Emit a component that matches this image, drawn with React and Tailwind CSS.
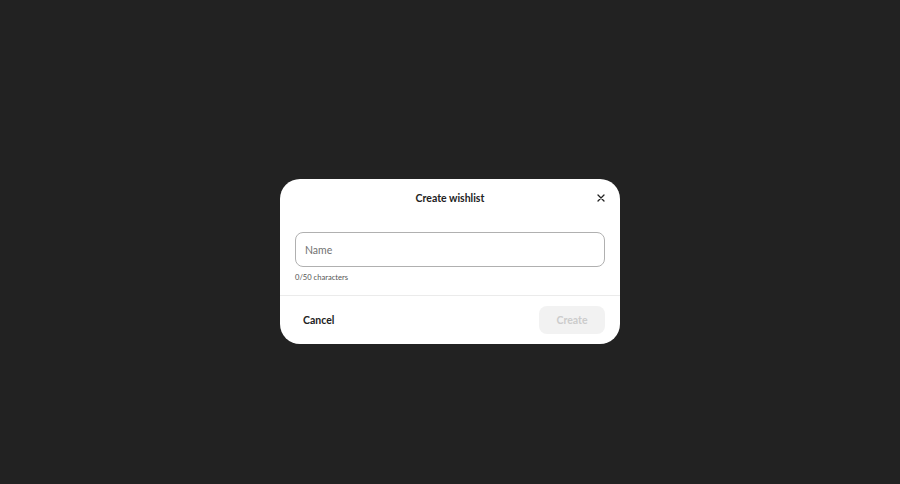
export default function App() {
  return (
    <div
      className="w-[900px] h-[484px] bg-[#222222] flex justify-center pt-[179px]"
      style={{ fontFamily: "Lato, 'Noto Sans', sans-serif" }}
    >
      <div className="w-[340px] h-[165px] bg-white rounded-[20px] flex flex-col overflow-hidden">
        <div className="h-[38px] flex items-center justify-center relative shrink-0 pt-[2px]">
          <span className="text-[10.5px] font-bold text-[#222222]">Create wishlist</span>
          <button className="absolute right-[13px] top-[13px] w-[12px] h-[12px] flex items-center justify-center">
            <svg width="8" height="8" viewBox="0 0 8 8" fill="none">
              <path d="M1 1L7 7M7 1L1 7" stroke="#222222" strokeWidth="1.3" strokeLinecap="round" />
            </svg>
          </button>
        </div>
        <div className="px-[15px] pt-[15px] flex-1 border-b border-[#ebebeb]">
          <div className="h-[35px] border border-[#b0b0b0] rounded-[8px] flex items-center px-[9px] pt-[2px]">
            <span className="text-[10.5px] text-[#717171]">Name</span>
          </div>
          <div className="mt-[5px] text-[7.6px] text-[#555555] leading-[10px]">0/50 characters</div>
        </div>
        <div className="h-[48px] shrink-0 flex items-center justify-between pl-[23px] pr-[15px]">
          <span className="text-[10.5px] font-bold text-[#222222] pt-[2px]">Cancel</span>
          <button className="w-[66px] h-[28px] rounded-[8px] bg-[#f2f2f2] text-[10.5px] font-bold text-[#cccccc] pt-[2px]">
            Create
          </button>
        </div>
      </div>
    </div>
  );
}
